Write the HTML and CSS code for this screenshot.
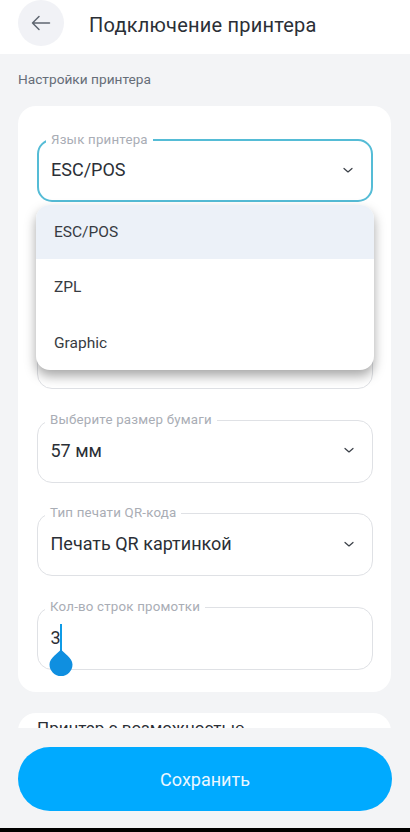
FILE: index.html
```html
<!DOCTYPE html>
<html lang="ru">
<head>
  <meta charset="UTF-8">
  <meta name="viewport" content="width=device-width, initial-scale=1.0">
  <title>Подключение принтера</title>
  <link rel="stylesheet" href="styles.css">
</head>
<body>
  <div class="screen">

    <!-- Header -->
    <div class="header">
      <button class="back-btn">
        <svg width="24" height="24" viewBox="0 0 24 24" fill="none" stroke="#5f6670" stroke-width="1.5" stroke-linecap="round" stroke-linejoin="round">
          <path d="M20.500 12H3.500M10 5.500L3.500 12L10 18.500"/>
        </svg>
      </button>
      <h1 class="title">Подключение принтера</h1>
    </div>

    <!-- Scrolling content -->
    <div class="content">
      <p class="section-label">Настройки принтера</p>

      <div class="card settings-card">
        <div class="field active">
          <span class="field-label">Язык принтера</span>
          <span class="field-value">ESC/POS</span>
          <svg class="chevron" width="12" height="12" viewBox="0 0 12 12" fill="none" stroke="#3a3f47" stroke-width="1.2" stroke-linecap="round" stroke-linejoin="round"><path d="M2 4.500L6 8L10 4.500"/></svg>
        </div>
        <div class="field"></div>
        <div class="field"></div>
        <div class="field">
          <span class="field-label">Выберите размер бумаги</span>
          <span class="field-value">57 мм</span>
          <svg class="chevron" width="12" height="12" viewBox="0 0 12 12" fill="none" stroke="#3a3f47" stroke-width="1.2" stroke-linecap="round" stroke-linejoin="round"><path d="M2 4.500L6 8L10 4.500"/></svg>
        </div>
        <div class="field">
          <span class="field-label">Тип печати QR-кода</span>
          <span class="field-value">Печать QR картинкой</span>
          <svg class="chevron" width="12" height="12" viewBox="0 0 12 12" fill="none" stroke="#3a3f47" stroke-width="1.2" stroke-linecap="round" stroke-linejoin="round"><path d="M2 4.500L6 8L10 4.500"/></svg>
        </div>
        <div class="field">
          <span class="field-label">Кол-во строк промотки</span>
          <span class="field-value">3</span>
          <span class="caret"></span>
          <svg class="caret-handle" width="24" height="27" viewBox="0 0 24 27"><path d="M12 0C14.500 4.500 23.500 8.500 23.500 15.500A11.500 11.500 0 0 1 0.500 15.500C0.500 8.500 9.500 4.500 12 0Z" fill="#0f8fe0"/></svg>
        </div>

        <!-- Open dropdown -->
        <div class="dropdown">
          <div class="option selected">ESC/POS</div>
          <div class="option">ZPL</div>
          <div class="option">Graphic</div>
        </div>
      </div>

      <div class="card next-card">Принтер с возможностью</div>
    </div>

    <!-- Footer -->
    <div class="footer">
      <button class="save-btn">Сохранить</button>
    </div>
    <div class="nav-strip"></div>
  </div>
</body>
</html>
```

FILE: styles.css
```css
* {
  box-sizing: border-box;
}
body {
  margin: 0;
  font-family: Roboto, "Noto Sans", sans-serif;
  background-color: #f3f4f6;
}
.screen {
  display: flex;
  flex-direction: column;
  height: 832px;
  overflow: hidden;
  background-color: #f3f4f6;
}
.header {
  display: flex;
  align-items: flex-start;
  gap: 25px;
  flex: none;
  height: 54px;
  padding: 0 18px;
  background-color: #fff;
}
.back-btn {
  display: flex;
  align-items: center;
  justify-content: center;
  width: 46px;
  height: 46px;
  padding: 0;
  border: none;
  border-radius: 50%;
  background-color: #f1f2f6;
}
.title {
  margin: 0;
  font-size: 20px;
  font-weight: 400;
  line-height: 50px;
  letter-spacing: 0.22px;
  color: #2b2f36;
}
.content {
  flex: 1;
  min-height: 0;
  overflow: hidden;
  padding: 0 19px 0 18px;
}
.section-label {
  margin: 17px 0 18px;
  font-size: 13.700px;
  line-height: 17px;
  color: #666d78;
}
.card {
  border-radius: 18px;
  background-color: #fff;
}
.settings-card {
  position: relative;
  display: flex;
  flex-direction: column;
  gap: 30.500px;
  padding: 33px 18px 22px 19px;
}
.field {
  position: relative;
  display: flex;
  align-items: center;
  justify-content: space-between;
  height: 63px;
  padding: 0 17px 2px 12.500px;
  border: 1.5px solid #dfe1e5;
  border-radius: 15px;
}
.field.active {
  border: 2px solid #55bcd6;
  padding-left: 12px;
}
.field-label {
  position: absolute;
  top: -8px;
  left: 7px;
  padding: 0 5px;
  background-color: #fff;
  font-size: 13.300px;
  line-height: 14px;
  letter-spacing: 0.2px;
  color: #a9adb5;
}
.field-value {
  font-size: 18px;
  color: #2b2f36;
}
.caret {
  position: absolute;
  top: 16px;
  left: 21.500px;
  width: 2px;
  height: 28px;
  background-color: #0f9be6;
}
.caret-handle {
  position: absolute;
  top: 41.500px;
  left: 10.500px;
}
.dropdown {
  position: absolute;
  top: 99px;
  left: 18px;
  right: 17px;
  height: 165px;
  overflow: hidden;
  border-radius: 14px;
  background-color: #fff;
  box-shadow: 0 6px 12px rgba(0, 0, 0, 0.35);
}
.option {
  display: flex;
  align-items: center;
  height: 56px;
  padding-left: 18px;
  font-size: 15.500px;
  color: #373b42;
}
.option.selected {
  height: 54px;
  background-color: #ecf1f8;
}
.next-card {
  height: 60px;
  margin-top: 21px;
  padding: 5px 19px;
  font-size: 17px;
  color: #2b2f36;
}
.footer {
  flex: none;
  height: 100px;
  padding: 19px 18px 0;
  background-color: #f3f4f6;
}
.save-btn {
  display: block;
  width: 100%;
  height: 64px;
  border: none;
  border-radius: 32px;
  background-color: #00aaff;
  font-family: inherit;
  font-size: 18px;
  color: #eaf7ff;
}
.nav-strip {
  flex: none;
  height: 4px;
  background-color: #000;
}
```
